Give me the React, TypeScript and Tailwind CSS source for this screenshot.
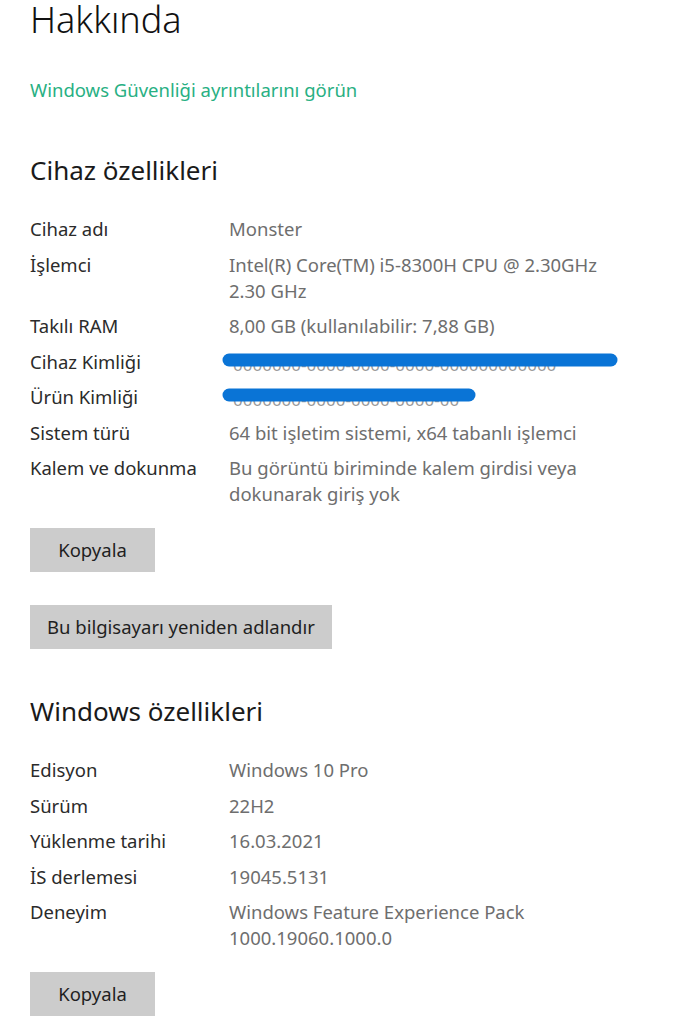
const font = { fontFamily: '"Noto Sans", "Open Sans", sans-serif' };

type Row = { label: string; value?: string[]; redact?: number };

const device: Row[] = [
  { label: 'Cihaz adı', value: ['Monster'] },
  { label: 'İşlemci', value: ['Intel(R) Core(TM) i5-8300H CPU @ 2.30GHz', '2.30 GHz'] },
  { label: 'Takılı RAM', value: ['8,00 GB (kullanılabilir: 7,88 GB)'] },
  { label: 'Cihaz Kimliği', redact: 390 },
  { label: 'Ürün Kimliği', redact: 248 },
  { label: 'Sistem türü', value: ['64 bit işletim sistemi, x64 tabanlı işlemci'] },
  { label: 'Kalem ve dokunma', value: ['Bu görüntü biriminde kalem girdisi veya', 'dokunarak giriş yok'] },
];

const windows: Row[] = [
  { label: 'Edisyon', value: ['Windows 10 Pro'] },
  { label: 'Sürüm', value: ['22H2'] },
  { label: 'Yüklenme tarihi', value: ['16.03.2021'] },
  { label: 'İS derlemesi', value: ['19045.5131'] },
  { label: 'Deneyim', value: ['Windows Feature Experience Pack', '1000.19060.1000.0'] },
];

// blue marker stroke drawn over the hidden id
function Redaction({ width }: { width: number }) {
  return (
    <svg width={width + 8} height={26} viewBox={`0 0 ${width + 8} 26`} className="-ml-[8px] block">
      <text x={12} y={22} fontSize={17} fill="#9a9a9a" style={font}>
        {'0000000-0000-0000-0000-000000000000'.slice(0, Math.round(width / 10))}
      </text>
      <line x1={8} y1={11} x2={width} y2={11} stroke="#0a74d6" strokeWidth={13} strokeLinecap="round" />
    </svg>
  );
}

function Props({ rows }: { rows: Row[] }) {
  return (
    <div className="flex flex-col gap-y-[9.5px]">
      {rows.map((r) => (
        <div key={r.label} className="grid grid-cols-[199px_1fr] text-[18.5px] leading-[26px]">
          <div className="text-[#2b2b2b]">{r.label}</div>
          {r.redact ? (
            <Redaction width={r.redact} />
          ) : (
            <div className="text-[#6e6e6e]">
              {r.value!.map((v) => (
                <div key={v}>{v}</div>
              ))}
            </div>
          )}
        </div>
      ))}
    </div>
  );
}

function Button({ children }: { children: string }) {
  return (
    <button className="h-[44px] min-w-[125px] self-start bg-[#cccccc] px-[17px] text-[18.5px] text-[#1f1f1f]">
      {children}
    </button>
  );
}

export default function App() {
  return (
    <div className="flex min-h-screen flex-col bg-white px-[30px] font-normal" style={font}>
      <h1 className="text-[36px] font-light leading-[40px] text-[#111]">Hakkında</h1>
      <a className="mt-[37px] text-[18.5px] leading-[26px] text-[#28b083]">Windows Güvenliği ayrıntılarını görün</a>

      <h2 className="mt-[50px] text-[26px] leading-[34px] text-[#1a1a1a]">Cihaz özellikleri</h2>
      <div className="mt-[29px]">
        <Props rows={device} />
      </div>
      <div className="mt-[21px] flex flex-col gap-[33px]">
        <Button>Kopyala</Button>
        <Button>Bu bilgisayarı yeniden adlandır</Button>
      </div>

      <h2 className="mt-[45px] text-[26px] leading-[34px] text-[#1a1a1a]">Windows özellikleri</h2>
      <div className="mt-[29px]">
        <Props rows={windows} />
      </div>
      <div className="mt-[21px] flex flex-col">
        <Button>Kopyala</Button>
      </div>
    </div>
  );
}
